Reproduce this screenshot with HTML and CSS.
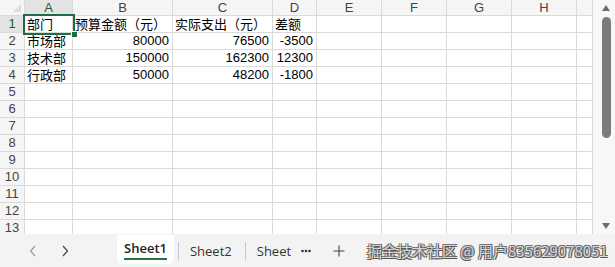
FILE: index.html
```html
<!DOCTYPE html>
<html lang="zh-CN">
<head>
<meta charset="utf-8">
<link rel="stylesheet" href="styles.css">
</head>
<body>
<div class="app">
  <div class="main">
    <div class="sheet">
      <div class="grid">
        <div class="corner"><span class="tri"></span></div>
        <div class="ch sel">A</div><div class="ch">B</div><div class="ch">C</div><div class="ch">D</div><div class="ch">E</div><div class="ch">F</div><div class="ch">G</div><div class="ch">H</div><div class="ch"></div>

        <div class="rh sel">1</div><div class="c a1"><span class="txt">部门</span><span class="selbox"><span class="handle"></span></span></div><div class="c"><span class="txt">预算金额（元）</span></div><div class="c"><span class="txt">实际支出（元）</span></div><div class="c"><span class="txt">差额</span></div><div class="c"></div><div class="c"></div><div class="c"></div><div class="c"></div><div class="c"></div>
        <div class="rh">2</div><div class="c"><span class="txt">市场部</span></div><div class="c n">80000</div><div class="c n">76500</div><div class="c n">-3500</div><div class="c"></div><div class="c"></div><div class="c"></div><div class="c"></div><div class="c"></div>
        <div class="rh">3</div><div class="c"><span class="txt">技术部</span></div><div class="c n">150000</div><div class="c n">162300</div><div class="c n">12300</div><div class="c"></div><div class="c"></div><div class="c"></div><div class="c"></div><div class="c"></div>
        <div class="rh">4</div><div class="c"><span class="txt">行政部</span></div><div class="c n">50000</div><div class="c n">48200</div><div class="c n">-1800</div><div class="c"></div><div class="c"></div><div class="c"></div><div class="c"></div><div class="c"></div>
        <div class="rh">5</div><div class="c"></div><div class="c"></div><div class="c"></div><div class="c"></div><div class="c"></div><div class="c"></div><div class="c"></div><div class="c"></div><div class="c"></div>
        <div class="rh">6</div><div class="c"></div><div class="c"></div><div class="c"></div><div class="c"></div><div class="c"></div><div class="c"></div><div class="c"></div><div class="c"></div><div class="c"></div>
        <div class="rh">7</div><div class="c"></div><div class="c"></div><div class="c"></div><div class="c"></div><div class="c"></div><div class="c"></div><div class="c"></div><div class="c"></div><div class="c"></div>
        <div class="rh">8</div><div class="c"></div><div class="c"></div><div class="c"></div><div class="c"></div><div class="c"></div><div class="c"></div><div class="c"></div><div class="c"></div><div class="c"></div>
        <div class="rh">9</div><div class="c"></div><div class="c"></div><div class="c"></div><div class="c"></div><div class="c"></div><div class="c"></div><div class="c"></div><div class="c"></div><div class="c"></div>
        <div class="rh">10</div><div class="c"></div><div class="c"></div><div class="c"></div><div class="c"></div><div class="c"></div><div class="c"></div><div class="c"></div><div class="c"></div><div class="c"></div>
        <div class="rh">11</div><div class="c"></div><div class="c"></div><div class="c"></div><div class="c"></div><div class="c"></div><div class="c"></div><div class="c"></div><div class="c"></div><div class="c"></div>
        <div class="rh">12</div><div class="c"></div><div class="c"></div><div class="c"></div><div class="c"></div><div class="c"></div><div class="c"></div><div class="c"></div><div class="c"></div><div class="c"></div>
        <div class="rh">13</div><div class="c"></div><div class="c"></div><div class="c"></div><div class="c"></div><div class="c"></div><div class="c"></div><div class="c"></div><div class="c"></div><div class="c"></div>
      </div>
    </div>
    <div class="vscroll">
      <svg class="arrow" width="10" height="8" viewBox="0 0 10 8"><path d="M5 1 L9 7 L1 7 Z" fill="#6b6b6b"/></svg>
      <div class="track"><div class="thumb"></div></div>
      <svg class="arrow" width="10" height="8" viewBox="0 0 10 8"><path d="M1 1 L9 1 L5 7 Z" fill="#6b6b6b"/></svg>
    </div>
  </div>
  <div class="tabbar">
    <div class="nav">
      <svg width="8" height="12" viewBox="0 0 8 12"><path d="M6 1 L1.5 6 L6 11" fill="none" stroke="#9a9a9a" stroke-width="1.2"/></svg>
      <svg width="8" height="12" viewBox="0 0 8 12"><path d="M2 1 L6.5 6 L2 11" fill="none" stroke="#444" stroke-width="1.2"/></svg>
    </div>
    <div class="tab active"><span class="tlabel">Sheet1</span></div>
    <div class="sep"></div>
    <div class="tab">Sheet2</div>
    <div class="sep"></div>
    <div class="tab last">Sheet</div>
    <div class="more">
      <svg width="10" height="4" viewBox="0 0 10 4"><circle cx="1.5" cy="2" r="1.3" fill="#333"/><circle cx="5" cy="2" r="1.3" fill="#333"/><circle cx="8.5" cy="2" r="1.3" fill="#333"/></svg>
    </div>
    <div class="plus">
      <svg width="12" height="12" viewBox="0 0 12 12"><path d="M6 0.5 V11.5 M0.5 6 H11.5" stroke="#444" stroke-width="1.1"/></svg>
    </div>
    <div class="wm">掘金技术社区 @ 用户835629078051</div>
  </div>
</div>
</body>
</html>
```
FILE: styles.css
```css
html, body {
  margin: 0;
  padding: 0;
  background: #ffffff;
}
body {
  width: 615px;
  height: 267px;
  overflow: hidden;
  font-family: "Liberation Sans", "Noto Sans CJK SC", sans-serif;
}
.app {
  display: flex;
  flex-direction: column;
  width: 615px;
  height: 267px;
}
.main {
  display: flex;
  height: 234px;
  overflow: hidden;
}
.sheet {
  width: 593px;
  height: 234px;
  overflow: hidden;
}
.grid {
  display: grid;
  grid-template-columns: 25px 48px 100px 100px 44px 65px 65px 65px 65px 16px;
  grid-template-rows: 16px repeat(13, 17px);
}
.grid > div {
  box-sizing: border-box;
  border-right: 1px solid #dadada;
  border-bottom: 1px solid #dadada;
  white-space: nowrap;
}
.corner {
  background: #f5f5f5;
  position: relative;
}
.tri {
  position: absolute;
  right: 3px;
  bottom: 3px;
  width: 0;
  height: 0;
  border-left: 8px solid transparent;
  border-bottom: 8px solid #dcdcdc;
}
.ch {
  background: #f5f5f5;
  color: #444;
  font-size: 13px;
  line-height: 15px;
  text-align: center;
}
.rh {
  background: #f5f5f5;
  color: #444;
  font-size: 13px;
  line-height: 16px;
  text-align: center;
}
.ch.sel, .rh.sel {
  background: #e3e3e3;
  color: #1f5c3a;
}
.c {
  font-size: 13px;
  line-height: 16px;
  height: 17px;
  color: #000;
  padding: 0 2px;
  font-family: "Liberation Sans", "Noto Sans CJK SC", sans-serif;
  display: flex;
  align-items: center;
}
.txt {
  display: block;
  line-height: 16px;
  margin-top: 2px;
}
.c.n {
  justify-content: flex-end;
  padding-right: 3px;
}
.a1 {
  position: relative;
}
.selbox {
  position: absolute;
  left: -2px;
  top: -2px;
  width: 48px;
  height: 17px;
  border: 2px solid #1e6b45;
}
.handle {
  position: absolute;
  right: -5px;
  bottom: -5px;
  width: 5px;
  height: 5px;
  background: #1e6b45;
  border: 1px solid #ffffff;
}
.vscroll {
  width: 22px;
  height: 234px;
  background: #f7f7f7;
  display: flex;
  flex-direction: column;
  align-items: center;
  box-sizing: border-box;
  padding: 4px 0 4px 4px;
}
.arrow {
  flex: none;
}
.track {
  flex: 1;
  padding-top: 5px;
}
.thumb {
  width: 9px;
  height: 121px;
  border-radius: 5px;
  background: #7b7b7b;
}
.tabbar {
  flex: 1;
  display: flex;
  align-items: center;
  background: #f3f3f3;
  font-family: "Open Sans", "Noto Sans", sans-serif;
  font-size: 13px;
  color: #333;
  position: relative;
}
.nav {
  display: flex;
  gap: 24px;
  padding-left: 29px;
  width: 88px;
  box-sizing: border-box;
  align-items: center;
}
.tab {
  padding: 0 13px 0 11px;
  height: 33px;
  display: flex;
  align-items: center;
}
.tab.active {
  background: #ffffff;
  margin-left: 29px;
  height: 29px;
  margin-top: -2px;
  border-radius: 0 0 6px 6px;
  padding: 0 7px;
  font-weight: 600;
  color: #222;
  margin-right: 4px;
}
.tlabel {
  border-bottom: 2px solid #217346;
  line-height: 17px;
  padding-bottom: 1px;
}
.sep {
  width: 1px;
  height: 18px;
  background: #c8c8c8;
}
.tab.last {
  padding-right: 10px;
}
.more {
  display: flex;
  align-items: center;
  width: 28px;
}
.plus {
  display: flex;
  align-items: center;
  padding-left: 4px;
}
.wm {
  position: absolute;
  left: 367px;
  top: 6px;
  font-family: "Noto Sans CJK SC", sans-serif;
  font-size: 15px;
  color: #d8d8d8;
  letter-spacing: 0;
  text-shadow: 1px 1px 0 #555, -1px -1px 0 #777, 1px -1px 0 #666, -1px 1px 0 #666;
}
```
